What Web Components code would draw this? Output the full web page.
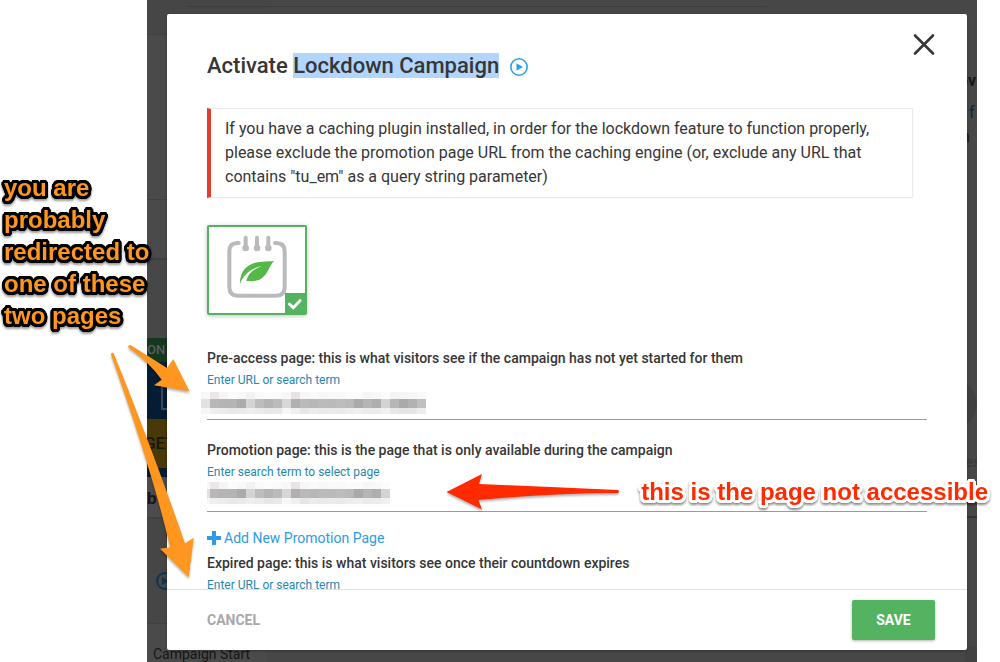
<!DOCTYPE html>
<html lang="en">
<head>
<meta charset="utf-8">
<title>Activate Lockdown Campaign</title>
<style>
  body { margin: 0; background: #fff; font-family: Roboto, "Noto Sans", sans-serif; color: #363636; }
</style>
</head>
<body>
<campaign-stage>
  <page-behind slot="page"></page-behind>
  <modal-dialog>
    <modal-title slot="title">Activate <mark>Lockdown Campaign</mark></modal-title>
    <alert-note>If you have a caching plugin installed, in order for the lockdown feature to function properly, please exclude the promotion page URL from the caching engine (or, exclude any URL that contains "tu_em" as a query string parameter)</alert-note>
    <campaign-type></campaign-type>
    <page-field label="Pre-access page: this is what visitors see if the campaign has not yet started for them" hint="Enter URL or search term" cells="25"></page-field>
    <page-field class="inset" label="Promotion page: this is the page that is only available during the campaign" hint="Enter search term to select page" cells="21"></page-field>
    <add-link>Add New Promotion Page</add-link>
    <page-field label="Expired page: this is what visitors see once their countdown expires" hint="Enter URL or search term"></page-field>
  </modal-dialog>
  <callout-arrows slot="notes"></callout-arrows>
  <callout-note slot="notes" class="redirect">you are probably redirected to one of these two pages</callout-note>
  <callout-note slot="notes" class="access">this is the page not accessible</callout-note>
</campaign-stage>

<script>
function define(name, html, setup) {
  customElements.define(name, class extends HTMLElement {
    constructor() {
      super();
      this.attachShadow({ mode: 'open' }).innerHTML = html;
    }
    connectedCallback() { if (setup) setup(this, this.shadowRoot); }
  });
}

define('campaign-stage', `
<style>
  :host { display: block; position: relative; height: 100vh; min-height: 480px; overflow: hidden; }
  .screen { position: relative; box-sizing: border-box; height: 100%; margin: 0 23px 0 147px; padding: 14px 10px 12px 20px; background: #474747; }
</style>
<main class="screen"><slot name="page"></slot><slot></slot></main>
<slot name="notes"></slot>`);

/* The dimmed page; only its edges show round the dialog. */
define('page-behind', `
<style>
  :host { position: absolute; inset: 0; display: flex; justify-content: space-between; overflow: hidden; color: #161616; }
  .edge { display: flex; flex-direction: column; overflow: hidden; white-space: nowrap; box-sizing: border-box; }
  .left { width: 120px; background: #4a4a4a; }
  .right { width: 12px; background: #474747; }
  .edge div { flex: none; box-sizing: border-box; }
  .top { height: 35px; background: #464646; border-bottom: 1px solid #414141; }
  .r1 { height: 165px; border-bottom: 1px solid #414141; }
  .r2 { height: 60px; border-bottom: 2px solid #3f3f3f; }
  .r3 { height: 78px; background: #474747; }
  .on { height: 24px; background: #14381f; color: #5c5c5c; font: 500 13px/24px Roboto, sans-serif; }
  .navy { height: 57px; background: #051d34; padding: 24px 0 0 14px; }
  .navy i { display: block; width: 20px; height: 24px; box-sizing: border-box; border: 2px solid #3c4a57; }
  .get { height: 49px; background: #493907; color: #171717; font: 500 17px/49px Roboto, sans-serif; text-indent: -3px; }
  .base { height: 9px; background: #051d34; }
  .b { height: 42px; background: #4c4c4c; border-bottom: 2px solid #414141; font: 700 17px/42px Roboto, sans-serif; }
  .play { height: 105px; background: #464646; padding: 53px 0 0 9px; border-bottom: 1px solid #404040; }
  .start { flex: 1 0 38px !important; padding-left: 6px; font: 14px/16px Roboto, sans-serif; padding-top: 22px; background: #4a4a4a; }
  .rtop { height: 71px; }
  .ov { height: 20px; font: 700 16px/20px Roboto, sans-serif; text-indent: -6px; }
  .f { height: 24px; margin-top: 10px; color: #0e2540; font: 16px/24px Roboto, sans-serif; text-indent: 4px; }
  .n { height: 24px; font: 16px/24px Roboto, sans-serif; text-indent: -4px; }
  .disc { width: 48px; height: 48px; margin: 231px 0 0 -36px; border-radius: 50%; background: #404040; }
  .es { height: 20px; margin-top: 24px; color: #3a3a3a; font: 500 15px/20px Roboto, sans-serif; }
  .dash { height: 2px; margin-top: 44px; border-top: 2px dashed #333; }
  .end { margin-top: auto; height: 16px; background: #424242; }
  .rule { position: absolute; top: 6px; left: 40px; right: 210px; height: 1px; background: #3d3d3d; }
</style>
<div class="edge left">
  <div class="top"></div><div class="r1"></div><div class="r2"></div><div class="r3"></div>
  <div class="on">ON</div><div class="navy"><i></i></div><div class="get">GET</div><div class="base"></div>
  <div class="b">b</div>
  <div class="play"><svg width="18" height="18" viewBox="0 0 18 18"><circle cx="9" cy="9" r="8" fill="none" stroke="#12344e" stroke-width="2"/><path d="M6 5l7 4-7 4z" fill="#12344e"/></svg></div>
  <div class="start">Campaign Start</div>
</div>
<div class="rule"></div>
<div class="edge right">
  <div class="rtop"></div><div class="ov">ov</div><div class="f">f</div><div class="n">n</div>
  <div class="disc"></div><div class="es">es</div><div class="dash"></div><div class="end"></div>
</div>`);

define('modal-dialog', `
<style>
  :host { display: block; position: relative; height: 100%; }
  section { display: flex; flex-direction: column; height: 100%; background: #fff; border-radius: 2px; box-shadow: 0 1px 3px rgba(0,0,0,.3); }
  .content { flex: 1; min-height: 0; overflow: hidden; padding: 39px 40px 0; }
  .close { position: absolute; top: 18px; right: 31px; width: 24px; height: 24px; padding: 0; border: 0; background: none; }
  .close svg { display: block; }
  footer { flex: none; display: flex; justify-content: space-between; align-items: center; box-sizing: border-box; height: 61px; padding: 0 32px 0 40px; border-top: 1px solid #e2e2e2; }
  footer button { height: 40px; padding: 0; border: 0; background: none; font: 700 14px/40px Roboto, sans-serif; color: #a8a8a8; }
  footer .save { width: 83px; border-radius: 2px; background: #54b361; color: #fff; box-shadow: 0 1px 3px rgba(0,0,0,.3); }
</style>
<section role="dialog" aria-label="Activate Lockdown Campaign">
  <div class="content"><slot name="title"></slot><slot></slot></div>
  <footer><button type="button">CANCEL</button><button type="button" class="save">SAVE</button></footer>
</section>
<button type="button" class="close" aria-label="Close"><svg width="24" height="24" viewBox="0 0 24 24"><path d="M3 3.500l18 18M21 3.500l-18 18" stroke="#363636" stroke-width="2.600" stroke-linecap="round"/></svg></button>`);

define('modal-title', `
<style>
  :host { display: block; margin-bottom: 29px; }
  h1 { display: flex; align-items: center; gap: 11px; margin: 0; font: 500 22px/26px Roboto, sans-serif; }
  ::slotted(mark) { background: #b1d5fd; color: inherit; }
  a { display: block; height: 18px; padding-top: 2px; }
  svg { display: block; }
</style>
<h1><span><slot></slot></span><a href="#" aria-label="Watch video"><svg width="18" height="18" viewBox="0 0 18 18"><circle cx="9" cy="9" r="8.200" fill="none" stroke="#2e9fe6" stroke-width="1.600"/><path d="M6.500 5.300l6.500 3.700-6.500 3.700z" fill="#2e9fe6"/></svg></a></h1>`);

define('alert-note', `
<style>
  :host { display: block; margin: 0 14px 27px 0; }
  p { margin: 0; padding: 8px 32px 8px 14px; border: 1px solid #ebebeb; border-left: 4px solid #dd3e2f; font-size: 16px; line-height: 24px; box-shadow: 0 0 2px rgba(0,0,0,.06); }
</style>
<p><slot></slot></p>`);

define('campaign-type', `
<style>
  :host { display: block; margin-bottom: 35px; }
  button { display: block; width: 100px; height: 90px; padding: 0; border: 2px solid #54b361; border-radius: 2px; background: #fff; box-shadow: 0 1px 4px rgba(0,0,0,.25); }
  svg { display: block; }
</style>
<button type="button" aria-pressed="true" aria-label="Evergreen campaign">
<svg width="96" height="86" viewBox="6 6 288 258">
  <path d="M95 54H92Q67 54 67 79V187Q67 212 92 212H208Q233 212 233 187V79Q233 54 208 54H204" fill="none" stroke="#b9babc" stroke-width="12" stroke-linecap="round"/>
  <path d="M116 38V68M150 38V68M184 38V68" stroke="#b9babc" stroke-width="12" stroke-linecap="round"/>
  <g fill="#b9babc"><circle cx="116" cy="69" r="10"/><circle cx="150" cy="69" r="10"/><circle cx="184" cy="69" r="10"/></g>
  <path d="M99 177C97 132 130 111 165 110C180 109 190 109 201 108C188 122 185 139 171 154C157 170 137 169 118 168C122 145 142 131 165 123C135 129 110 146 99 177Z" fill="#54b948"/>
  <path d="M234 204H294V264H234Z" fill="#54b361"/>
  <path d="M247 237l12 11 20-21" fill="none" stroke="#fff" stroke-width="9" stroke-linecap="round" stroke-linejoin="miter"/>
</svg></button>`);

const MOSAIC = [
  { y: 0, h: 7, c: 'f7f7f7 ebe7e7 f6f5f5 fbfbfb f8f8f8 f2f2f2 fafafa fcfcfc fbfbfb faf6f5 e8e4e4 f7f7f7 fafafa f7f7f7 f9f9f9 f8f8f8 fcfcfc fbfbfb f6f6f6 f8f8f8 fbfbfb f4f4f4 f5f5f5 f7f7f7 f9f9f9' },
  { y: 7, h: 9, c: 'e1e1e1 b8b8b8 b4b4b4 b4b4b4 ababab d3d5d4 bdbdbd b4b4b4 bbbbbb d6d8d7 b0b0b0 bababa b5b8b7 bbbbbb bababa bdbdbd b9b9b9 a9abaa b5b5b5 aeaeae d2d4d3 b7b7b7 aaaaaa b2b2b2 c0c0c0' },
  { y: 16, h: 6, c: 'f6f6f6 eeeeee ececec e8e8e8 eaeaea eeeeee ebebeb e7e7e7 e9e9e9 f7f7f7 efefef e6e6e6 ececec e9e9e9 ebebeb e9e9e9 ededed efefef ebebeb ececec f1f1f1 e8e8e8 e4e4e4 e6e6e6 ededed' }
];
define('page-field', `
<style>
  :host { display: block; margin-bottom: 22px; }
  .box { position: relative; }
  label, .hint { display: block; }
  label { font: 500 14px/16px Roboto, sans-serif; }
  .hint { margin-top: 6px; font: 12px/16px Roboto, sans-serif; color: #2587b3; }
  input { display: block; box-sizing: border-box; width: 100%; height: 32px; padding: 0 0 4px; border: 0; border-bottom: 1px solid #9b9b9b; background: none; font: 16px Roboto, sans-serif; outline: 0; }
  svg { position: absolute; left: -6px; top: 4px; }
  :host(.inset) svg { top: 2px; clip-path: inset(0 0 0 6px); }
</style>
<label for="page"></label><span class="hint" id="hint"></span>
<div class="box"><input id="page" type="text" aria-describedby="hint"></div>`, (el, root) => {
  root.querySelector('label').textContent = el.getAttribute('label');
  root.querySelector('.hint').textContent = el.getAttribute('hint');
  const n = Number(el.getAttribute('cells'));
  if (!n || root.querySelector('svg')) return;
  const rects = MOSAIC.map(r => r.c.split(' ').slice(0, n).map((c, i) =>
    `<rect x="${i * 9}" y="${r.y}" width="9" height="${r.h}" fill="#${c}"/>`).join('')).join('');
  root.querySelector('.box').insertAdjacentHTML('beforeend',
    `<svg width="226" height="22" aria-hidden="true" shape-rendering="crispEdges">${rects}</svg>`);
});

define('add-link', `
<style>
  :host { display: block; margin: -4px 0 9px; }
  a { display: flex; width: max-content; align-items: center; gap: 3px; color: #2e9be6; text-decoration: none; font: 14px/16px Roboto, sans-serif; }
</style>
<a href="#"><svg width="14" height="14" viewBox="0 0 14 14"><path d="M7 0v14M0 7h14" stroke="#2e9be6" stroke-width="4"/></svg><slot></slot></a>`);

/* A ring of shadows gives the letters a rounded outline. */
const ring = Array.from({ length: 24 }, (_, i) => {
  const a = i * Math.PI / 12;
  return `${(Math.cos(a) * 3).toFixed(2)}px ${(Math.sin(a) * 3).toFixed(2)}px 0 var(--outline)`;
}).join(', ');
define('callout-note', `
<style>
  :host { display: block; position: absolute; font: 700 24px/32px "Liberation Sans", Arial, sans-serif; text-shadow: ${ring}; }
  :host(.redirect) { --outline: #000; left: 4px; top: 172px; width: 150px; color: #ff961f; filter: drop-shadow(0 2px 1px rgba(0,0,0,.4)); }
  :host(.access) { --outline: #fff; right: 12px; top: 476px; color: #ff2a00; white-space: nowrap; filter: drop-shadow(0 2px 1px rgba(0,0,0,.45)); }
</style>
<slot></slot>`);

define('callout-arrows', `
<style>
  :host { display: block; position: absolute; left: 0; top: 0; pointer-events: none; }
  svg { display: block; filter: drop-shadow(0 2px 1px rgba(0,0,0,.3)); }
</style>
<svg width="640" height="600" viewBox="0 0 640 600" aria-hidden="true">
  <g fill="#ff961f">
    <path d="M130.500 345L167 368L173.300 359L189.500 391.300L154 385.300L161.700 379.700Q150 363 128.500 347.500Q127.500 345 130.500 345Z"/>
    <path d="M113.500 353Q149 440 185 543.300L193.700 537.700L188.700 577L160 548.700L170 547.300Q155 480 111 354.500Q111 352 113.500 353Z"/>
  </g>
  <path d="M446.500 492L482 474L479 484Q550 487 618 490Q620 491.500 618 493Q550 493 478.500 500L482 509.500Z" fill="#ff2a00"/>
</svg>`);
</script>
</body>
</html>
